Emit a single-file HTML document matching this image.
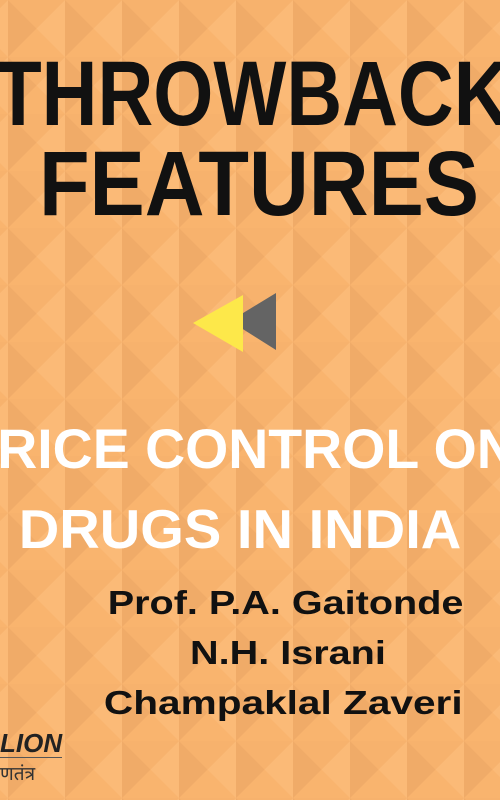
<!DOCTYPE html>
<html><head><style>
body{margin:0;width:500px;height:800px;overflow:hidden;position:relative;font-family:"Liberation Sans",sans-serif;background:#f9b46e}
.c{position:absolute;font-weight:bold;white-space:nowrap;transform-origin:center}
.r{position:absolute;font-weight:bold;white-space:nowrap;right:37px;transform-origin:right center;color:#111;font-size:33px}
</style></head><body>
<svg width="500" height="800" style="position:absolute;left:0;top:0">
<defs><pattern id="p" width="57" height="57" patternUnits="userSpaceOnUse" x="8" y="0">
<rect width="57" height="57" fill="#f9b46e"/>
<polygon points="0,0 28.5,28.5 0,57" fill="#f0ab68"/>
<polygon points="57,0 28.5,28.5 57,57" fill="#fbba77"/>
<polygon points="0,0 57,0 28.5,28.5" fill="#f7b26d"/>
</pattern></defs>
<rect width="500" height="800" fill="url(#p)"/>
<polygon points="230,321 276,293 276,350" fill="#646464"/>
<polygon points="193,323 243,295 243,352" fill="#fde84a"/>
</svg>
<div style="position:absolute;left:0;top:0;width:500px;height:800px;overflow:hidden">
<div class="c" style="left:252px;top:42px;font-size:92px;color:#111;transform:translateX(-50%) scaleX(0.84)">THROWBACK</div>
<div class="c" style="left:259px;top:132px;font-size:92px;color:#111;transform:translateX(-50%) scaleX(0.9)">FEATURES</div>
<div class="c" style="left:257px;top:416px;font-size:56px;color:#fff;transform:translateX(-50%) scaleX(0.99)">RICE CONTROL ON</div>
<div class="c" style="left:240px;top:497px;font-size:55px;color:#fff;transform:translateX(-50%) scaleX(1.02)">DRUGS IN INDIA</div>
<div class="r" style="top:584px;transform:scaleX(1.2)">Prof. P.A. Gaitonde</div>
<div class="r" style="top:634px;right:auto;left:190px;transform-origin:left center;transform:scaleX(1.2)">N.H. Israni</div>
<div class="r" style="top:684px;transform:scaleX(1.23)">Champaklal Zaveri</div>
<div style="position:absolute;left:0;top:728px;font-size:26px;font-weight:bold;font-style:italic;color:#222">LION</div>
<div style="position:absolute;left:0;top:757px;width:62px;border-top:1px solid #555"></div>
<div style="position:absolute;left:0;top:760px;font-size:19px;color:#333;font-family:'Liberation Sans','Noto Sans CJK SC',sans-serif">णतंत्र</div>
</div>
</body></html>
